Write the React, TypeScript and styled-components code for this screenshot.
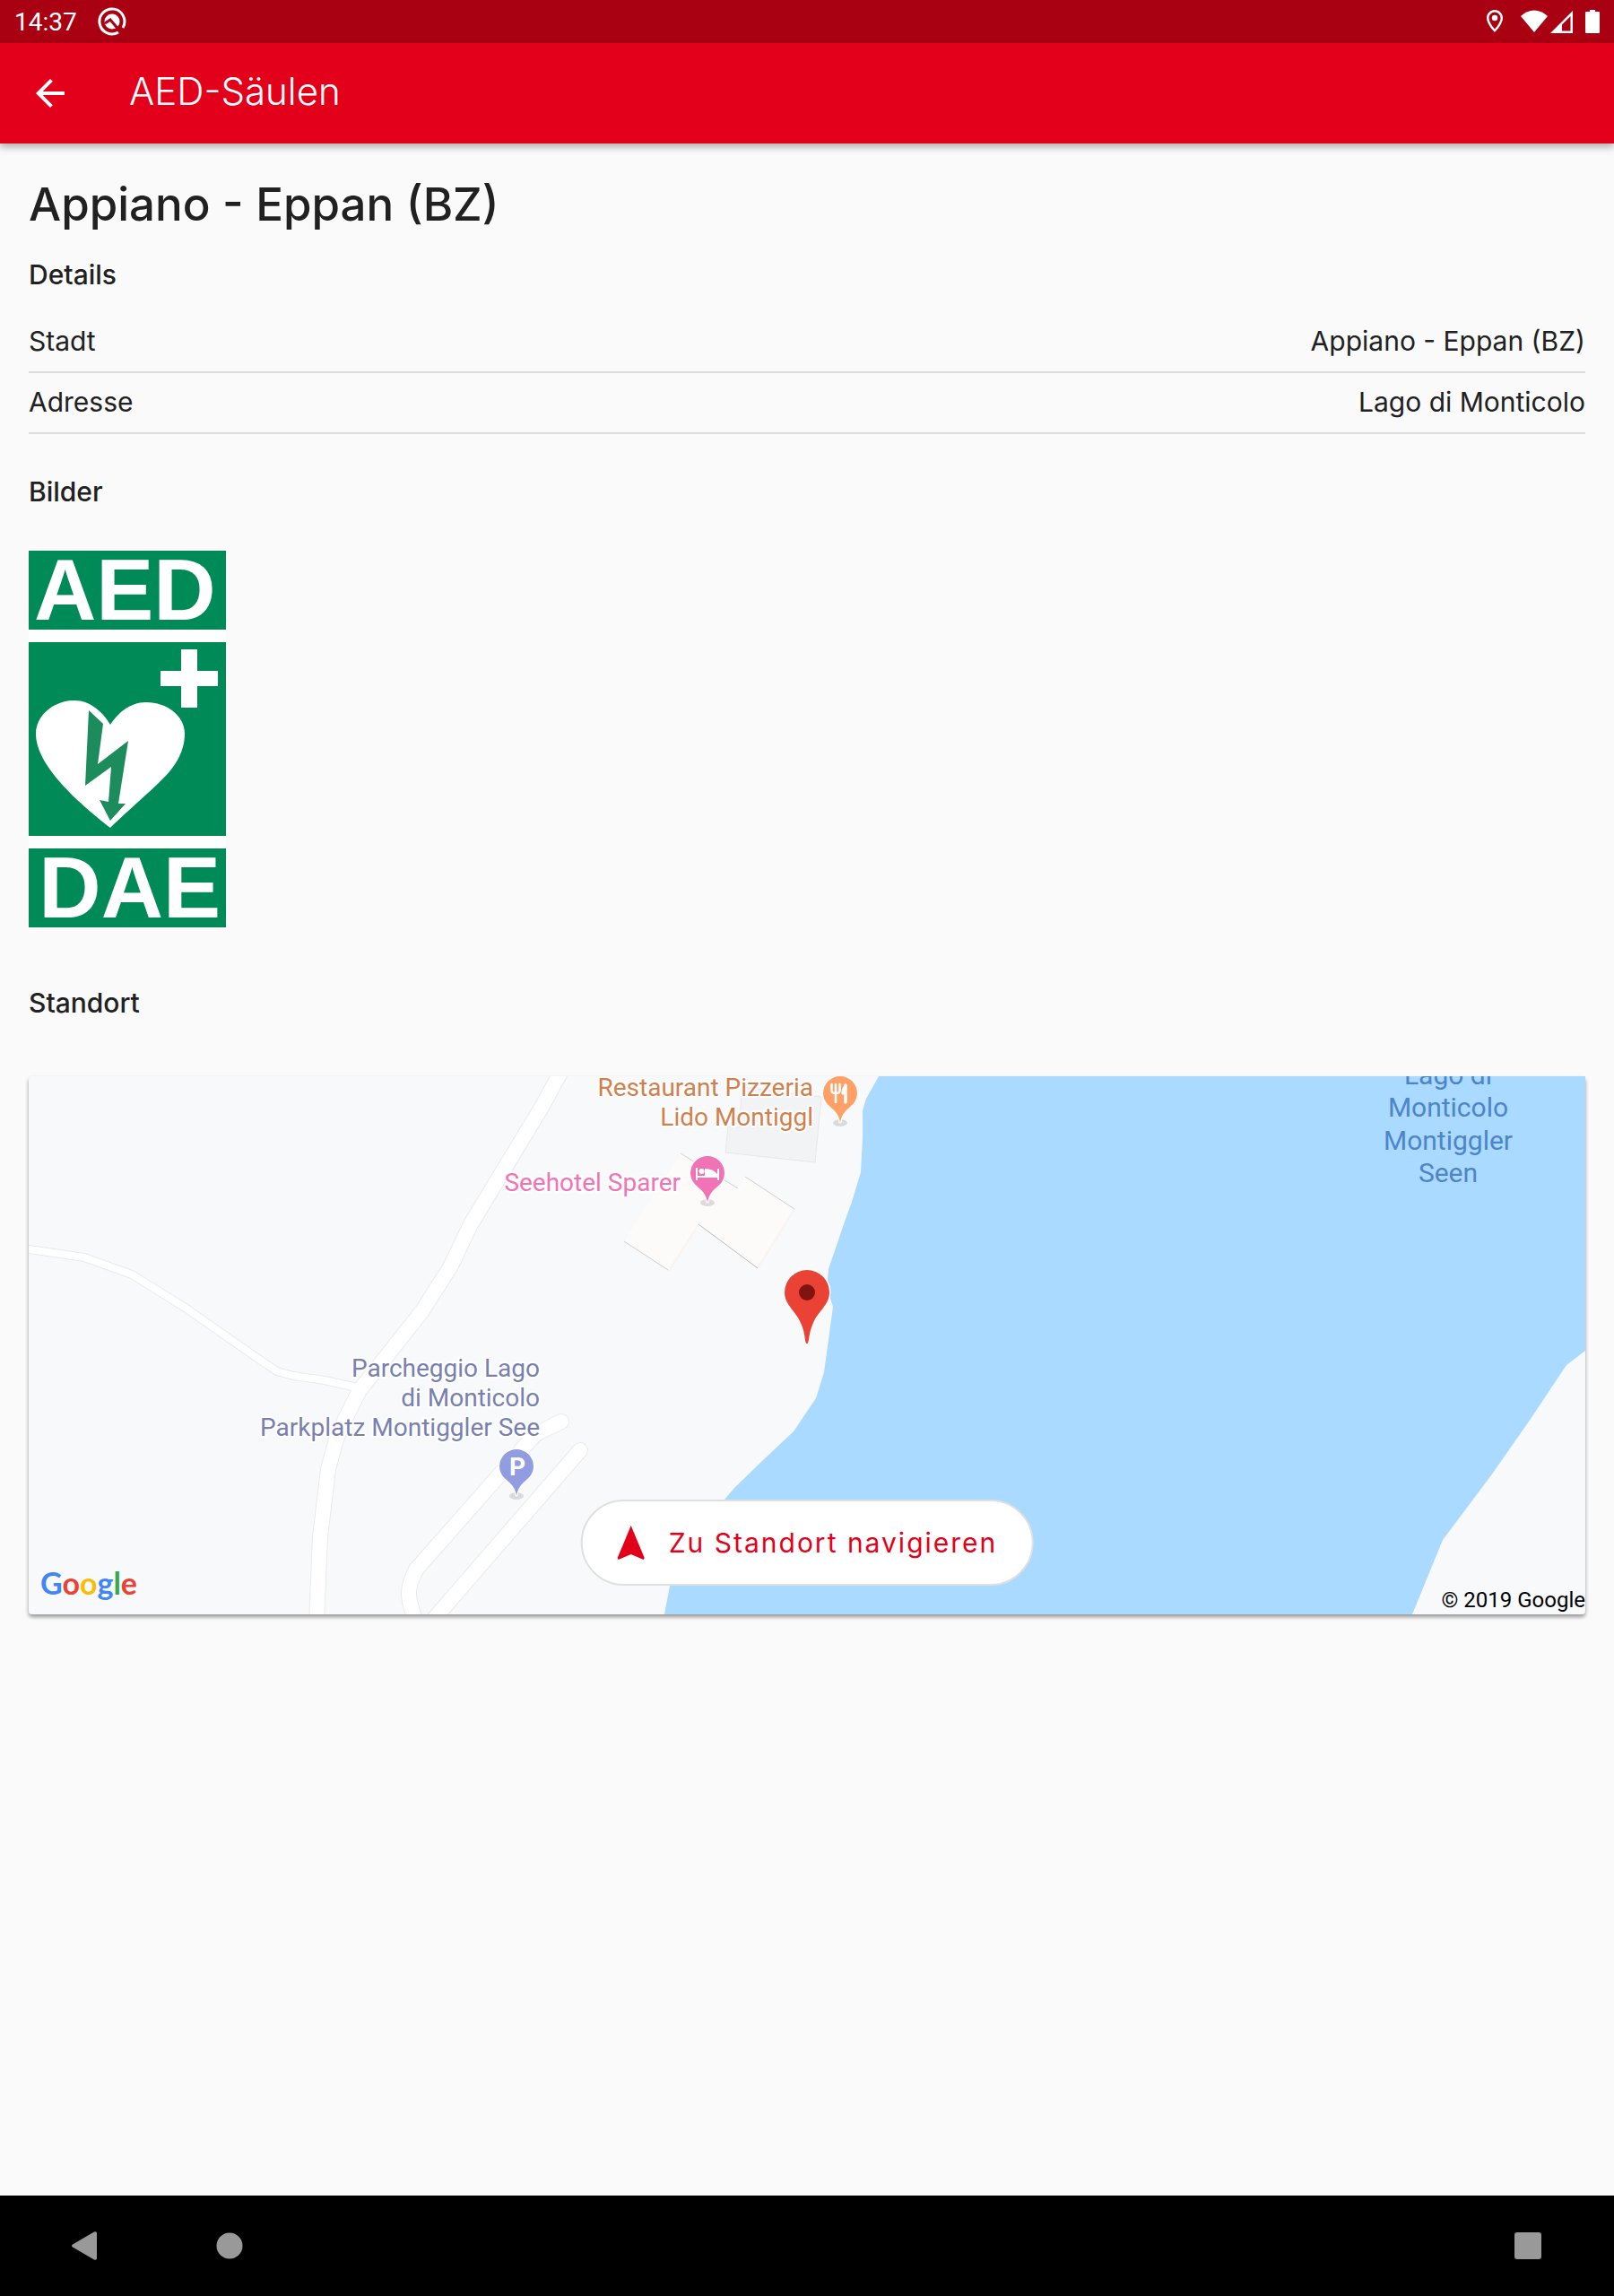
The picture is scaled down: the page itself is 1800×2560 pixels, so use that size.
import React from "react";
import styled, { createGlobalStyle } from "styled-components";

const brand = "#e3001b";
const ink = "#212121";
const rule = "#dcdcdc";
const uiFont = `Inter, "Liberation Sans", sans-serif`;
const systemFont = `Roboto, "Liberation Sans", sans-serif`;

const GlobalStyle = createGlobalStyle`
  *, *::before, *::after { box-sizing: border-box; }
  body { margin: 0; background: #fafafa; color: ${ink}; font-family: ${uiFont}; }
  h1, h2, dl, dd, dt { margin: 0; }
  button { font: inherit; border: 0; padding: 0; background: none; cursor: pointer; }
  svg { display: block; }
`;

const Screen = styled.div`
  min-height: 100vh;
  display: flex;
  flex-direction: column;
`;

const StatusBar = styled.div`
  height: 48px;
  padding: 0 16px;
  display: flex;
  align-items: center;
  justify-content: space-between;
  background: #a90012;
  color: #fff;
  font: 400 28px/48px ${systemFont};
`;

const StatusGroup = styled.div<{ $gap: number }>`
  display: flex;
  align-items: center;
  gap: ${(p) => p.$gap}px;
`;

const Clock = styled.span`
  line-height: 44px;
  padding-top: 2px;
`;

const AppBar = styled.header`
  height: 112px;
  padding: 0 32px;
  display: flex;
  align-items: center;
  gap: 64px;
  background: ${brand};
  color: #fff;
  box-shadow: 0 4px 8px rgba(0, 0, 0, 0.3);
  position: relative;
`;

const IconButton = styled.button`
  color: inherit;
  display: flex;
  align-items: center;
  justify-content: center;
  width: 48px;
  height: 48px;
`;

const AppTitle = styled.div`
  font-size: 42px;
  font-weight: 300;
  line-height: 48px;
  padding-bottom: 4px;
`;

const Content = styled.main`
  flex: 1;
  padding: 32px;
  display: flex;
  flex-direction: column;
`;

const PageTitle = styled.h1`
  font-size: 51px;
  font-weight: 500;
  line-height: 72px;
  margin-bottom: 24px;
`;

const Section = styled.section`
  display: flex;
  flex-direction: column;
`;

const SectionTitle = styled.h2<{ $after: number }>`
  font-size: 30px;
  font-weight: 500;
  line-height: 36px;
  margin-bottom: ${(p) => p.$after}px;
`;

const DetailList = styled.dl`
  margin-bottom: 46px;
`;

const DetailRow = styled.div`
  height: 68px;
  padding-bottom: 2px;
  display: flex;
  align-items: center;
  justify-content: space-between;
  border-bottom: 2px solid ${rule};
  font-size: 30px;
  font-weight: 400;
`;

const Picture = styled.figure`
  margin: 0 0 66px;
  width: 220px;
  display: flex;
  flex-direction: column;
  gap: 14px;
  background: #fff;
`;

const SignText = styled.div<{ $align: string }>`
  height: 88px;
  padding: 0 6px;
  background: #008a57;
  color: #fff;
  text-align: ${(p) => p.$align};
  font: 700 96px/88px "Liberation Sans", sans-serif;
`;

const MapCard = styled.div`
  position: relative;
  height: 600px;
  border-radius: 4px;
  background: #f8f9fb;
  box-shadow: 0 3px 4px rgba(0, 0, 0, 0.4);
`;

const MapDrawing = styled.svg`
  width: 100%;
  height: 100%;
`;

const MapLabel = styled.text<{ $halo?: boolean }>`
  font-family: ${systemFont};
  paint-order: stroke;
  stroke: ${(p) => (p.$halo ? "#fff" : "none")};
  stroke-width: 4px;
  stroke-linejoin: round;
`;

const Copyright = styled.div`
  position: absolute;
  right: 0;
  bottom: 0;
  color: #000;
  font: 400 24px/32px ${systemFont};
`;

const GoogleMark = styled.div`
  position: absolute;
  left: 13px;
  bottom: 13px;
  font: 700 34px/44px Lato, sans-serif;
`;

const Letter = styled.span<{ $color: string }>`
  color: ${(p) => p.$color};
`;

const NavigateButton = styled.button`
  && {
    position: absolute;
    left: 50%;
    bottom: 32px;
    transform: translateX(-50%);
    height: 96px;
    padding: 0 38px;
    display: flex;
    align-items: center;
    gap: 26px;
    white-space: nowrap;
    border: 2px solid #e0e0e0;
    border-radius: 48px;
    background: #fff;
    color: ${brand};
    font-size: 30px;
    font-weight: 400;
    letter-spacing: 2px;
  }
`;

const NavBar = styled.nav`
  height: 112px;
  padding: 0 72px;
  display: flex;
  align-items: center;
  gap: 112px;
  background: #000;
  color: #999;
`;

const RecentsButton = styled(IconButton)`
  margin-left: auto;
`;

const details = [
  { label: "Stadt", value: "Appiano - Eppan (BZ)" },
  { label: "Adresse", value: "Lago di Monticolo" },
];

const googleLetters: [string, string][] = [
  ["G", "#4285f4"],
  ["o", "#ea4335"],
  ["o", "#fbbc05"],
  ["g", "#4285f4"],
  ["l", "#34a853"],
  ["e", "#ea4335"],
];

const roads = [
  { d: "M0 193L62 202L115 221L176 259L259 317L277 329L295 334L330 339L370 348", w: 8 },
  { d: "M594 385L569 397Q564 400 558 407L432 550L426 564Q422 576 426 590L431 606", w: 16 },
  { d: "M615 417L452 605", w: 16 },
  { d: "M594 -6L573 33L536 94L493 165L470 213L438 263L369 350L352 384L343 405L334 438L325 514L321 610", w: 16 },
];

function SystemLogo() {
  return (
    <svg width="32" height="36" viewBox="0 0 32 36" fill="none" aria-hidden="true">
      <path d="M23 30A14 14 0 1 1 28 25" stroke="#fff" strokeWidth="3" />
      <circle cx="16" cy="18" r="8.500" fill="#fff" />
      <path d="M8 20L14 16L25 29" stroke="#a90012" strokeWidth="3" />
    </svg>
  );
}

function PoiPin({ x, y, color, children }: { x: number; y: number; color: string; children: React.ReactNode }) {
  return (
    <g transform={`translate(${x} ${y})`}>
      <ellipse cx="0" cy="33" rx="8" ry="4" fill="#000" opacity="0.12" />
      <path
        d="M0 33Q-1 26 -5 21C-10 15 -19 11 -19 0A19 19 0 0 1 19 0C19 11 10 15 5 21Q1 26 0 33Z"
        fill={color}
        stroke="#fff"
        strokeWidth="3"
        paintOrder="stroke"
      />
      {children}
    </g>
  );
}

function LocationMap() {
  return (
    <MapDrawing viewBox="0 0 1736 600" preserveAspectRatio="xMidYMid slice" role="img" aria-label="Karte">
      {roads.map((r) => (
        <path key={r.d} d={r.d} fill="none" stroke="#e9eaeb" strokeWidth={r.w + 2} strokeLinecap="round" strokeLinejoin="round" />
      ))}
      {roads.map((r) => (
        <path key={r.d} d={r.d} fill="none" stroke="#fff" strokeWidth={r.w} strokeLinecap="round" strokeLinejoin="round" />
      ))}
      <path d="M795 12L884 23L877 96L777 85L780 56L793 57Z" fill="#f1f3f4" stroke="#e6e8ea" />
      <path d="M727 86L791 125L799 112L854 148L813 214L747 165L714 217L664 184Z" fill="#fcfbf9" />
      <path d="M747 165L714 217M854 148L813 214" stroke="#fbf3ee" strokeWidth="2" />
      <path d="M727 86L791 125M799 112L854 148M664 184L713 216" stroke="#cfcfcd" fill="none" />
      <path d="M747 165L813 214" stroke="#bbb" />
      <path
        d="M948 0L934 25L930 38V68L928 107L918 140L910 162L892 215L891 227L894 248L897 257L887 330L878 359L853 396L819 428L787 459L776 472L740 510L722 540L715 568L709 600H1543L1577 517L1631 445L1675 382L1715 322L1736 306V0Z"
        fill="#aadaff"
      />

      <g fill="#d27f4e" fontSize="28" textAnchor="end">
        <MapLabel $halo x="875" y="22">Restaurant Pizzeria</MapLabel>
        <MapLabel $halo x="875" y="55">Lido Montiggl</MapLabel>
      </g>
      <g fill="#f073b6" fontSize="28" textAnchor="end">
        <MapLabel $halo x="727" y="128">Seehotel Sparer</MapLabel>
      </g>
      <g fill="#7880b0" fontSize="28" textAnchor="end">
        <MapLabel $halo x="570" y="335">Parcheggio Lago</MapLabel>
        <MapLabel $halo x="570" y="368">di Monticolo</MapLabel>
        <MapLabel $halo x="570" y="401">Parkplatz Montiggler See</MapLabel>
      </g>
      <g fill="#4d84ca" fontSize="30" textAnchor="middle">
        <MapLabel x="1583" y="9">Lago di</MapLabel>
        <MapLabel x="1583" y="45">Monticolo</MapLabel>
        <MapLabel x="1583" y="82">Montiggler</MapLabel>
        <MapLabel x="1583" y="118">Seen</MapLabel>
      </g>

      <PoiPin x={905} y={19} color="#ffa066">
        <g fill="none" stroke="#fff" strokeLinecap="round">
          <path d="M-9.500 -10V-3Q-9.500 0 -5 0Q-0.500 0 -0.500 -3V-10M-5 -10V10" strokeWidth="2.500" />
          <path d="M6 -9V10" strokeWidth="3.500" />
          <path d="M6 -9Q2 -7 2 -1V1H6" fill="#fff" strokeWidth="1" />
        </g>
      </PoiPin>
      <PoiPin x={757} y={108} color="#f073b6">
        <path d="M-12 -6V8M12 -5V8M-12 4H12" stroke="#fff" strokeWidth="2" fill="none" />
        <circle cx="-6.500" cy="-2" r="3" fill="#fff" />
        <path d="M-3 4V-5Q6 -5 11 1V4Z" fill="#fff" />
      </PoiPin>
      <PoiPin x={544} y={435} color="#919de0">
        <text x="1" y="10" textAnchor="middle" fill="#fff" fontFamily="Roboto, sans-serif" fontWeight="700" fontSize="28">P</text>
      </PoiPin>

      <path
        d="M868 298C865 298 867 288 861 275C855 261 843 255 843 241A25 25 0 0 1 893 241C893 255 881 261 875 275C869 288 871 298 868 298Z"
        fill="#ea4335"
        stroke="#fff"
        strokeWidth="3"
        paintOrder="stroke"
      />
      <circle cx="868" cy="241" r="9" fill="#811411" />
    </MapDrawing>
  );
}

export default function App() {
  return (
    <Screen>
      <GlobalStyle />
      <StatusBar>
        <StatusGroup $gap={23}>
          <Clock>14:37</Clock>
          <SystemLogo />
        </StatusGroup>
        <StatusGroup $gap={0}>
          <svg width="128" height="48" viewBox="1656 0 128 48" fill="#fff" aria-hidden="true">
            <path
              fillRule="evenodd"
              d="M1667 11C1662 11 1658 15 1658 20C1658 27 1667 36 1667 36S1676 27 1676 20C1676 15 1672 11 1667 11ZM1667 13.500C1670.500 13.500 1673.500 16.500 1673.500 20C1673.500 24 1670 29 1667 32.500C1664 29 1660.500 24 1660.500 20C1660.500 16.500 1663.500 13.500 1667 13.500Z"
            />
            <circle cx="1667" cy="20" r="3.200" />
            <path d="M1696 18Q1703 11.500 1711 11.500T1726 18L1711 36Z" />
            <path fillRule="evenodd" d="M1754 12V37H1729ZM1751.500 18L1742 27.500V34.500H1751.500Z" />
            <path d="M1773 11H1779V13H1783Q1784 13 1784 14V36Q1784 37 1783 37H1769Q1768 37 1768 36V14Q1768 13 1769 13H1773Z" />
          </svg>
        </StatusGroup>
      </StatusBar>
      <AppBar>
        <IconButton aria-label="Zurück">
          <svg width="48" height="48" viewBox="0 0 24 24" fill="currentColor">
            <path d="M20 11H7.830l5.590-5.590L12 4l-8 8 8 8 1.410-1.410L7.830 13H20z" />
          </svg>
        </IconButton>
        <AppTitle>AED-Säulen</AppTitle>
      </AppBar>

      <Content>
        <PageTitle>Appiano - Eppan (BZ)</PageTitle>
        <Section>
          <SectionTitle $after={24}>Details</SectionTitle>
          <DetailList>
            {details.map((d) => (
              <DetailRow key={d.label}>
                <dt>{d.label}</dt>
                <dd>{d.value}</dd>
              </DetailRow>
            ))}
          </DetailList>
        </Section>
        <Section>
          <SectionTitle $after={48}>Bilder</SectionTitle>
          <Picture>
            <SignText $align="left">AED</SignText>
            <svg width="220" height="216" viewBox="0 0 220 216" role="img" aria-label="Defibrillator">
              <rect width="220" height="216" fill="#008a57" />
              <path d="M170 8H188V32H211V49H188V73H170V49H147V32H170Z" fill="#fff" />
              <path
                d="M91 207C62 184 8 140 8 102C8 82 27 66 49 65C68 64 83 78 91 92C99 80 112 67 131 67C154 67 174 82 174 102C174 125 160 143 145 157C128 173 104 194 91 207Z"
                fill="#fff"
              />
              <path d="M67 76L83 91L77 136L111 110L100 180H108L91 199L79 176L89 178L92 139L63 160Z" fill="#1c8c5c" />
            </svg>
            <SignText $align="right">DAE</SignText>
          </Picture>
        </Section>
        <Section>
          <SectionTitle $after={64}>Standort</SectionTitle>
          <MapCard>
            <LocationMap />
            <GoogleMark aria-label="Google">
              {googleLetters.map(([letter, color], i) => (
                <Letter key={i} $color={color}>{letter}</Letter>
              ))}
            </GoogleMark>
            <Copyright>© 2019 Google</Copyright>
            <NavigateButton>
              <svg width="32" height="38" viewBox="0 0 32 38" fill="currentColor" aria-hidden="true">
                <path d="M16 0L31 36L30 38L16 32L2 38L1 36Z" />
              </svg>
              Zu Standort navigieren
            </NavigateButton>
          </MapCard>
        </Section>
      </Content>

      <NavBar>
        <IconButton aria-label="Zurück">
          <svg width="32" height="32" viewBox="0 0 32 32" fill="currentColor">
            <path d="M1 14.500L25 0.500Q28 -0.500 28 2V30Q28 32.500 25 31.500L1 17.500Q-1 16 1 14.500Z" />
          </svg>
        </IconButton>
        <IconButton aria-label="Startbildschirm">
          <svg width="30" height="30" viewBox="0 0 30 30" fill="currentColor">
            <circle cx="15" cy="15" r="14.500" />
          </svg>
        </IconButton>
        <RecentsButton aria-label="Letzte Apps">
          <svg width="30" height="30" viewBox="0 0 30 30" fill="currentColor">
            <rect width="30" height="30" rx="3" />
          </svg>
        </RecentsButton>
      </NavBar>
    </Screen>
  );
}
